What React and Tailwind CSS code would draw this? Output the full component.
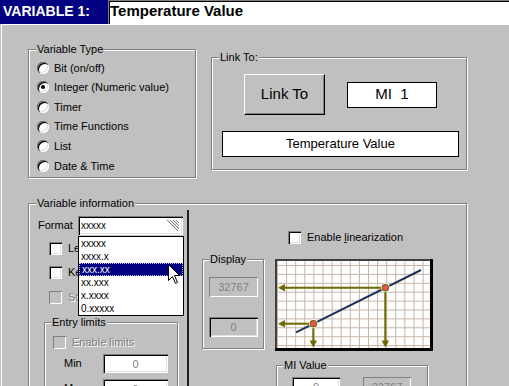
import clsx from 'clsx';

// Win98-style variable setup dialog

const GroupBox = ({ label, className, labelLeft = 'left-[7px]', children }) => (
  <div
    className={clsx(
      'relative shrink-0 border border-[#808080] shadow-[1px_1px_0_#fff,inset_1px_1px_0_#fff]',
      className
    )}
  >
    <span
      className={clsx(
        'absolute -top-[8px] bg-[#c0c0c0] px-[1px] text-[11px] leading-[14px] whitespace-nowrap',
        labelLeft
      )}
    >
      {label}
    </span>
    {children}
  </div>
);

const Radio = ({ checked }) => (
  <span className="relative inline-block w-[12px] h-[12px] shrink-0 rounded-full bg-white shadow-[inset_1px_1px_0_#808080,inset_2px_2px_0_#000,inset_-1px_-1px_0_#fff,inset_-2px_-2px_0_#dfdfdf]">
    {checked && (
      <span className="absolute left-[4px] top-[4px] w-[4px] h-[4px] rounded-full bg-black" />
    )}
  </span>
);

const Check = ({ disabled }) => (
  <span
    className={clsx(
      'inline-block w-[13px] h-[13px] shrink-0',
      disabled
        ? 'bg-[#c0c0c0] shadow-[inset_1px_1px_0_#808080,inset_-1px_-1px_0_#fff]'
        : 'bg-white shadow-[inset_1px_1px_0_#808080,inset_2px_2px_0_#000,inset_-1px_-1px_0_#fff,inset_-2px_-2px_0_#dfdfdf]'
    )}
  />
);

const Field = ({ value, className, disabled }) => (
  <div
    className={clsx(
      'flex items-center justify-center shrink-0 text-[11px] leading-[14px] text-[#808080]',
      disabled
        ? 'bg-[#c0c0c0] shadow-[inset_1px_1px_0_#808080,inset_-1px_-1px_0_#fff]'
        : 'shadow-[inset_1px_1px_0_#808080,inset_2px_2px_0_#000,inset_-1px_-1px_0_#fff,inset_-2px_-2px_0_#dfdfdf]',
      className
    )}
  >
    {value}
  </div>
);

const formats = ['xxxxx', 'xxxx.x', 'xxx.xx', 'xx.xxx', 'x.xxxx', '0.xxxxx'];

const Chart = () => {
  const vx = Array.from({ length: 17 }, (_, i) => 2.5 + i * 9.1);
  const hy = Array.from({ length: 10 }, (_, i) => 6.5 + i * 8.9);
  const olive = '#6e6a00';
  return (
    <svg width="158" height="92" viewBox="0 0 158 92" className="block shrink-0">
      <rect x="0" y="0" width="158" height="92" fill="#000" />
      <rect x="0" y="0" width="155" height="89" fill="#404040" />
      <rect x="2" y="2" width="153" height="87" fill="#fff" />
      {vx.map((x) => (
        <line key={'v' + x} x1={x} y1="2" x2={x} y2="89" stroke="#c8b4a8" strokeWidth="1" />
      ))}
      {hy.map((y) => (
        <line key={'h' + y} x1="2" y1={y} x2="155" y2={y} stroke="#c8b4a8" strokeWidth="1" />
      ))}
      <line x1="21" y1="73.3" x2="146" y2="11" stroke="#1e3458" strokeWidth="2" />
      {/* arrows from upper point */}
      <line x1="108" y1="28.7" x2="9" y2="28.7" stroke={olive} strokeWidth="2" />
      <polygon points="3,28.7 10,25 10,32.4" fill={olive} />
      <line x1="110.3" y1="31" x2="110.3" y2="82" stroke={olive} strokeWidth="2" />
      <polygon points="110.3,88.5 106.6,81.5 114,81.5" fill={olive} />
      {/* arrows from lower point */}
      <line x1="36" y1="64.7" x2="9" y2="64.7" stroke={olive} strokeWidth="2" />
      <polygon points="3,64.7 10,61 10,68.4" fill={olive} />
      <line x1="38.3" y1="67" x2="38.3" y2="82" stroke={olive} strokeWidth="2" />
      <polygon points="38.3,88.5 34.6,81.5 42,81.5" fill={olive} />
      {[
        [110.3, 28.7],
        [38.3, 64.7],
      ].map(([x, y]) => (
        <g key={x}>
          <circle cx={x} cy={y} r="4.5" fill="#fff" />
          <circle cx={x} cy={y} r="3.2" fill="#f05050" stroke={olive} strokeWidth="1.2" />
        </g>
      ))}
    </svg>
  );
};

export default function App() {
  return (
    <div className="relative w-[509px] h-[386px] overflow-hidden bg-[#c0c0c0] font-['Liberation_Sans',Arial,sans-serif] text-black flex flex-col">
      {/* Title bar */}
      <div className="flex h-[24px] shrink-0">
        <div className="w-[108px] bg-[#000080] text-white font-bold text-[14px] leading-[18px] pl-[3px] pt-[2px] whitespace-nowrap">
          VARIABLE 1:
        </div>
        <div className="flex-1 bg-white border-t border-l border-[#808080] shadow-[inset_1px_1px_0_#000] font-bold text-[15px] leading-[18px] pl-[1px] pt-[1px] whitespace-nowrap">
          Temperature Value
        </div>
      </div>

      {/* Dialog body */}
      <div className="flex-1 ml-[1px] border-t border-l border-white">
        <div className="flex items-start">
          <GroupBox label="Variable Type" className="ml-[26px] mt-[24px] w-[168px] h-[129px]">
            <div className="pt-[8px] pl-[8px] text-[11px]">
              {['Bit (on/off)', 'Integer (Numeric value)', 'Timer', 'Time Functions', 'List', 'Date & Time'].map(
                (t, i) => (
                  <div key={t} className="flex items-center gap-[5px] h-[19.6px] whitespace-nowrap">
                    <Radio checked={i === 1} />
                    <span>{t}</span>
                  </div>
                )
              )}
            </div>
          </GroupBox>

          <GroupBox label="Link To:" className="ml-[15px] mt-[32px] w-[256px] h-[113px]">
            <div className="flex items-center pt-[16px] pl-[32px]">
              <button className="w-[81px] h-[41px] bg-[#c0c0c0] border border-t-white border-l-white border-r-black border-b-black shadow-[inset_-1px_-1px_0_#808080] text-[15px]">
                Link To
              </button>
              <div className="ml-[22px] w-[90px] h-[26px] border border-black bg-white flex items-center justify-center text-[15px] whitespace-pre">
                MI  1
              </div>
            </div>
            <div className="ml-[10px] mt-[16px] w-[237px] h-[26px] border border-black bg-white flex items-center justify-center text-[13px]">
              Temperature Value
            </div>
          </GroupBox>
        </div>

        <GroupBox label="Variable information" className="ml-[26px] mt-[25px] w-[439px] h-[200px]">
          <div className="flex items-start text-[11px] leading-[13px]">
            {/* Left column */}
            <div className="mt-[6px] w-[160px] h-[200px] border-r-2 border-[#202020]">
              <div className="flex items-center pt-[6px]">
                <span className="w-[49px] pl-[9px]">Format</span>
                <div className="relative w-[105px] h-[19px] bg-white shadow-[inset_1px_1px_0_#808080,inset_2px_2px_0_#000,inset_-1px_-1px_0_#fff,inset_-2px_-2px_0_#dfdfdf] flex items-center">
                  <span className="pl-[3px] text-[10px] leading-[12px]">xxxxx</span>
                  <svg width="16" height="13" viewBox="0 0 16 13" className="absolute right-[3px] top-[3px]">
                    <path d="M3 1 L14 12 M6 1 L15 10 M9 1 L15 7 M12 1 L15 4" stroke="#808080" strokeWidth="1" fill="none" />
                    <path d="M4 1 L15 12 M7 1 L15 9 M10 1 L15 6" stroke="#dfdfdf" strokeWidth="1" fill="none" />
                  </svg>
                  {/* open list */}
                  <div className="absolute left-0 top-[20px] w-[106px] border border-black bg-white z-10">
                    {formats.map((f, i) => (
                      <div
                        key={f}
                        className={clsx(
                          'h-[13px] pl-[2px] text-[10px] leading-[12px]',
                          i === 2 ? 'bg-[#000080] text-white border border-dotted border-[#c0c0ff]' : 'pt-[1px]'
                        )}
                      >
                        {f}
                      </div>
                    ))}
                  </div>
                </div>
              </div>
              <div className="flex items-center h-[13px] ml-[20px] mt-[7px] gap-[6px] whitespace-nowrap">
                <Check />
                <span>Leading zeros</span>
              </div>
              <div className="flex items-center h-[13px] ml-[20px] mt-[11px] gap-[6px] whitespace-nowrap">
                <Check />
                <span>Keypad entry</span>
              </div>
              <div className="flex items-center h-[13px] ml-[20px] mt-[12px] gap-[6px] whitespace-nowrap">
                <Check disabled />
                <span className="text-[#808080] [text-shadow:1px_1px_0_#fff]">Store value</span>
              </div>

              <GroupBox label="Entry limits" labelLeft="left-[6px]" className="ml-[15px] mt-[18px] w-[134px] h-[100px]">
                <div className="flex items-center h-[13px] ml-[8px] mt-[13px] gap-[6px]">
                  <Check disabled />
                  <span className="text-[#808080] [text-shadow:1px_1px_0_#fff]">Enable limits</span>
                </div>
                <div className="flex items-center mt-[5px]">
                  <span className="w-[58px] pl-[19px]">Min</span>
                  <Field value="0" className="w-[65px] h-[19px] bg-white" />
                </div>
                <div className="flex items-center mt-[6px]">
                  <span className="w-[58px] pl-[19px]">Max</span>
                  <Field value="0" className="w-[65px] h-[19px] bg-white" />
                </div>
              </GroupBox>
            </div>

            {/* Right part */}
            <div className="flex-1 flex flex-col">
              <div className="flex items-center h-[13px] ml-[99px] mt-[27px] gap-[6px] whitespace-nowrap">
                <Check />
                <span>
                  Enable <span className="underline">l</span>inearization
                </span>
              </div>
              <div className="flex items-start mt-[15px]">
                <GroupBox label="Display" labelLeft="left-[6px]" className="ml-[13px] w-[62px] h-[90px]">
                  <Field value="32767" disabled className="ml-[6px] mt-[17px] w-[49px] h-[20px]" />
                  <Field value="0" className="ml-[6px] mt-[20px] w-[49px] h-[20px] bg-[#c0c0c0]" />
                </GroupBox>
                <div className="ml-[11px]">
                  <Chart />
                </div>
              </div>
              <GroupBox label="MI Value" labelLeft="left-[6px]" className="ml-[87px] mt-[14px] w-[152px] h-[60px]">
                <div className="flex mt-[11px] pl-[15px]">
                  <Field value="0" className="w-[48px] h-[20px] bg-white" />
                  <Field value="32767" disabled className="ml-[23px] w-[48px] h-[20px]" />
                </div>
              </GroupBox>
            </div>
          </div>
        </GroupBox>
      </div>

      {/* mouse pointer over the list */}
      <svg width="13" height="21" viewBox="0 0 13 21" className="absolute left-[168px] top-[264px] z-20">
        <path
          d="M0.5 0.5 L0.5 16.5 L4.5 12.5 L7.5 19.5 L9.5 18.5 L6.5 11.5 L11.5 11.5 Z"
          fill="#fff"
          stroke="#000"
          strokeWidth="1"
        />
      </svg>
    </div>
  );
}
